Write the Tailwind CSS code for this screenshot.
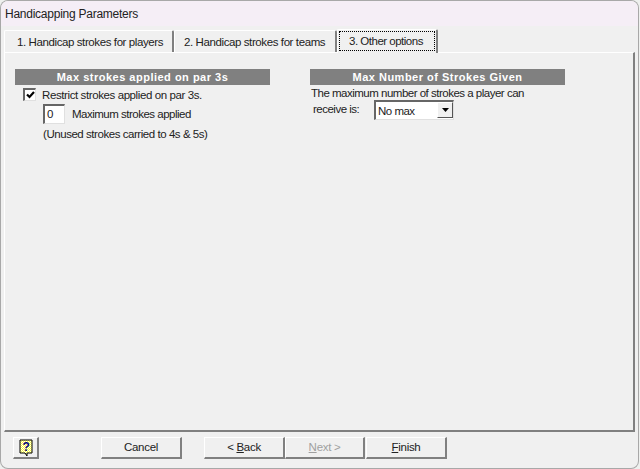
<!DOCTYPE html>
<html>
<head>
<meta charset="utf-8">
<script src="https://cdn.jsdelivr.net/npm/@tailwindcss/browser@4"></script>
</head>
<body class="m-0 bg-white">
<div class="w-[640px] h-[469px] overflow-hidden bg-[#eef0ee] font-['Liberation_Sans',sans-serif] text-[11.5px] tracking-[-0.5px] leading-[14px] text-[#222]">
  <div class="flex flex-col w-[639px] h-[469px] pl-px pt-px bg-[#a8a8a8] rounded-[8px] pr-px pb-px">
  <div class="flex flex-col grow bg-[#f0f0f0] rounded-[7px] overflow-hidden">
    <div class="h-[25px] shrink-0 bg-[#f5eef6] pl-[4px] pt-[6px] text-[12px] tracking-[-0.25px]">Handicapping Parameters</div>
    <div class="flex h-[26px] shrink-0 pl-[3px] items-end whitespace-nowrap">
      <div class="h-[22px] w-[170px] border-l border-t border-white border-r-2 border-r-[#808080] rounded-t-[2px] pl-[12px] pt-[4px] tracking-[-0.4px]">1. Handicap strokes for players</div>
      <div class="h-[22px] w-[163px] border-l border-t border-white border-r-2 border-r-[#808080] rounded-t-[2px] pl-[9px] pt-[4px] tracking-[-0.4px]">2. Handicap strokes for teams</div>
      <div class="h-[24px] w-[101px] border-l border-t border-white border-r-2 border-r-[#808080] rounded-t-[2px] pt-[1px] pl-px pr-px -mb-px relative bg-[#f0f0f0]">
        <div class="h-[20px] border border-dotted border-black text-center leading-[18px] pr-[2px]">3. Other options</div>
      </div>
    </div>
    <div class="h-[380px] shrink-0 ml-[3px] w-[631px] border-l border-t border-white border-r-2 border-b-2 border-r-[#808080] border-b-[#808080] pt-[16px] pl-[10px] flex gap-[40px]">
      <div class="w-[255px]">
        <div class="h-[16px] bg-[#808080] text-white font-bold text-[11px] text-center tracking-[0.5px] leading-[16px]">Max strokes applied on par 3s</div>
        <div class="flex items-center h-[15px] mt-[2px] pl-[8px] gap-[6px]">
          <span class="w-[13px] h-[13px] bg-white border-t-2 border-l-2 border-r border-b border-t-[#666] border-l-[#666] border-r-[#e0e0e0] border-b-[#e0e0e0] flex items-center justify-center">
            <svg width="9" height="9" viewBox="0 0 9 9"><path d="M1 3.500l2.500 2.500L8 1" fill="none" stroke="#000" stroke-width="2.200"/></svg>
          </span>
          <span class="tracking-[-0.4px]">Restrict strokes applied on par 3s.</span>
        </div>
        <div class="flex items-center h-[20px] mt-[2px] pl-[28px] gap-[7px]">
          <span class="w-[22px] h-[20px] bg-white border-t-2 border-l-2 border-r border-b border-t-[#666] border-l-[#666] border-r-[#e0e0e0] border-b-[#e0e0e0] pl-[2px] leading-[16px]">0</span>
          <span>Maximum strokes applied</span>
        </div>
        <div class="h-[14px] mt-[3px] pl-[28px] tracking-[-0.45px]">(Unused strokes carried to 4s &amp; 5s)</div>
      </div>
      <div class="w-[255px]">
        <div class="h-[16px] bg-[#808080] text-white font-bold text-[11px] text-center tracking-[0.5px] leading-[16px]">Max Number of Strokes Given</div>
        <div class="mt-[1px] pl-px">The maximum number of strokes a player can</div>
        <div class="flex">
          <span class="pl-[3px] w-[64px] pt-[2px]">receive is:</span>
          <span class="w-[80px] h-[20px] bg-white border-t-2 border-l-2 border-r border-b border-t-[#666] border-l-[#666] border-r-[#e0e0e0] border-b-[#e0e0e0] flex justify-between pl-[2px] pt-px leading-[16px]">No max
            <span class="w-[16px] h-[16px] -mt-px bg-[#f0f0f0] border border-white border-r-[#555] border-b-[#555] flex items-center justify-center">
              <svg width="7" height="4" viewBox="0 0 7 4"><path d="M0 0h7L3.500 4z" fill="#000"/></svg>
            </span>
          </span>
        </div>
      </div>
    </div>
    <div class="flex items-start pt-[5px] pl-[12px]">
      <div class="w-[26px] h-[22px] border-l border-t border-white border-r-2 border-b-2 border-r-[#808080] border-b-[#808080] flex items-center justify-center">
        <svg width="14" height="18" viewBox="0 0 14 18"><defs><pattern id="d" width="2" height="2" patternUnits="userSpaceOnUse"><rect width="2" height="2" fill="#fff"/><rect width="1" height="1" fill="#ffff30"/><rect x="1" y="1" width="1" height="1" fill="#ffff30"/></pattern></defs><path d="M1 1h12v13H8v3l-2-3H1z" fill="url(#d)" stroke="#000"/><text x="7" y="11.500" font-size="12" font-weight="700" text-anchor="middle" fill="#000080" font-family="Liberation Sans">?</text></svg>
      </div>
      <div class="w-[81px] h-[22px] ml-[62px] border-l border-t border-white border-r-2 border-b-2 border-r-[#808080] border-b-[#808080] text-center leading-[19px] tracking-[-0.3px]">Cancel</div>
      <div class="w-[81px] h-[22px] ml-[22px] border-l border-t border-white border-r-2 border-b-2 border-r-[#808080] border-b-[#808080] text-center leading-[19px] tracking-[-0.3px]">&lt; <u>B</u>ack</div>
      <div class="w-[80px] h-[22px] border-l border-t border-white border-r-2 border-b-2 border-r-[#808080] border-b-[#808080] text-center leading-[19px] tracking-[-0.3px] text-[#a0a0a0]"><u>N</u>ext &gt;</div>
      <div class="w-[81px] h-[22px] ml-px border-l border-t border-white border-r-2 border-b-2 border-r-[#808080] border-b-[#808080] text-center leading-[19px] tracking-[-0.3px]"><u>F</u>inish</div>
    </div>
  </div>
  </div>
</div>
</body>
</html>
